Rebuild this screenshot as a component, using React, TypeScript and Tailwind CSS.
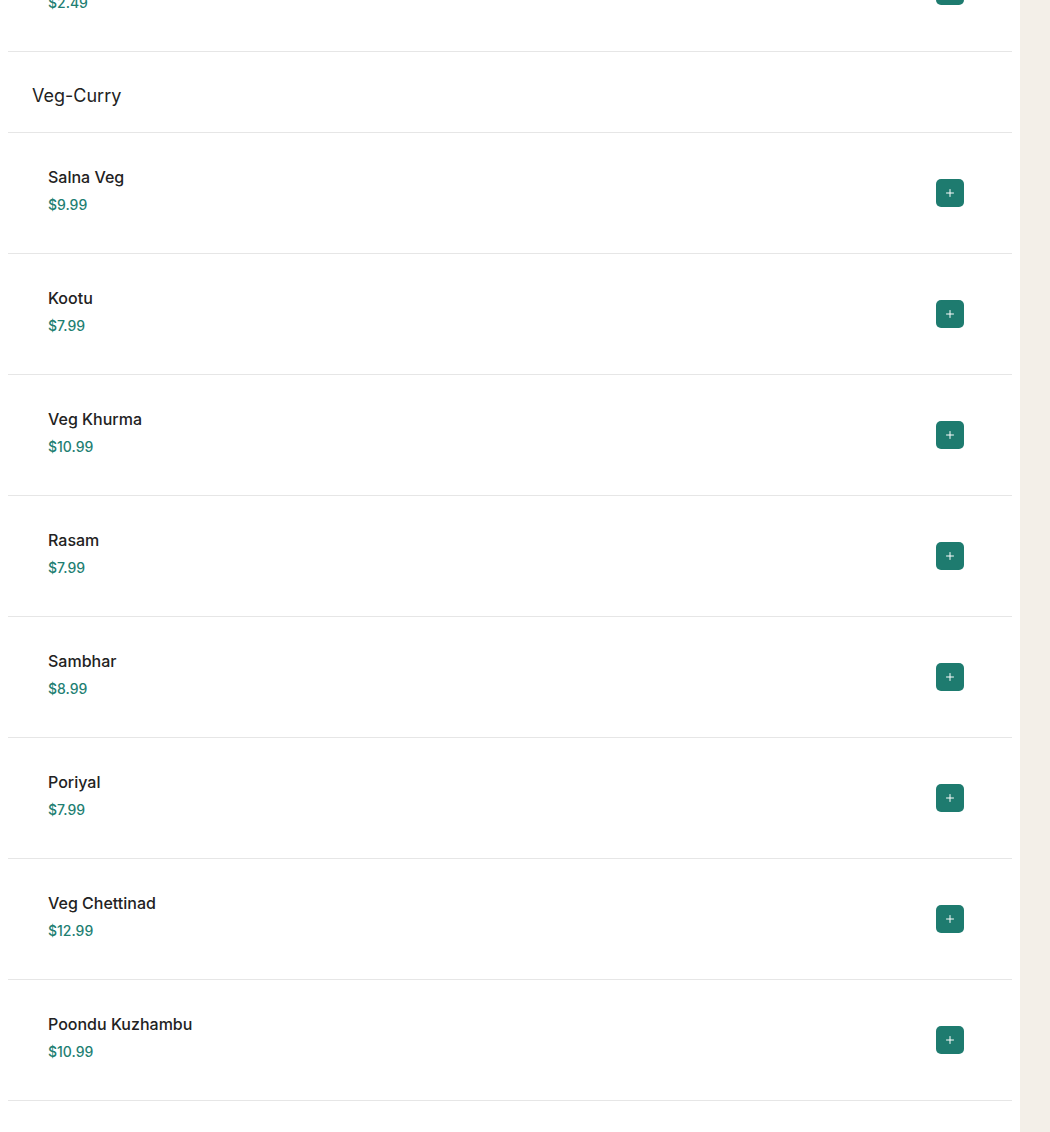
import { Plus } from 'lucide-react';

const items = [
  { name: 'Salna Veg', price: '$9.99' },
  { name: 'Kootu', price: '$7.99' },
  { name: 'Veg Khurma', price: '$10.99' },
  { name: 'Rasam', price: '$7.99' },
  { name: 'Sambhar', price: '$8.99' },
  { name: 'Poriyal', price: '$7.99' },
  { name: 'Veg Chettinad', price: '$12.99' },
  { name: 'Poondu Kuzhambu', price: '$10.99' },
];

function MenuItem({ name, price }: { name: string; price: string }) {
  return (
    <div className="flex h-[121px] items-start justify-between border-b border-[#e6e6e6] pl-10 pr-12">
      <div className="flex flex-col gap-[6px] pt-8">
        <span className="text-base font-medium leading-6 text-[#222]">{name}</span>
        <span className="text-sm font-medium leading-5 text-[#1f7f73]">{price}</span>
      </div>
      <button className="mt-[46px] flex h-7 w-7 items-center justify-center rounded-[5px] bg-[#1e7b6f] text-white">
        <Plus size={12} strokeWidth={2} />
      </button>
    </div>
  );
}

export default function App() {
  return (
    <div className="flex h-[1132px] w-[1050px] overflow-hidden bg-white font-['Inter',sans-serif]">
      <div className="w-[1020px] overflow-hidden">
        <div className="mx-2 -mt-[69px]">
          {/* previous section, last item (scrolled out) */}
          <MenuItem name="Papad" price="$2.49" />

          {/* VEG-CURRY */}
          <div className="flex h-[81px] items-center border-b border-[#e6e6e6] px-6 pt-2">
            <h3 className="text-lg font-normal text-[#222]">Veg-Curry</h3>
          </div>

          {items.map((item) => (
            <MenuItem key={item.name} name={item.name} price={item.price} />
          ))}
        </div>
      </div>
      <div className="flex-1 bg-[#f3efe8]"></div>
    </div>
  );
}
